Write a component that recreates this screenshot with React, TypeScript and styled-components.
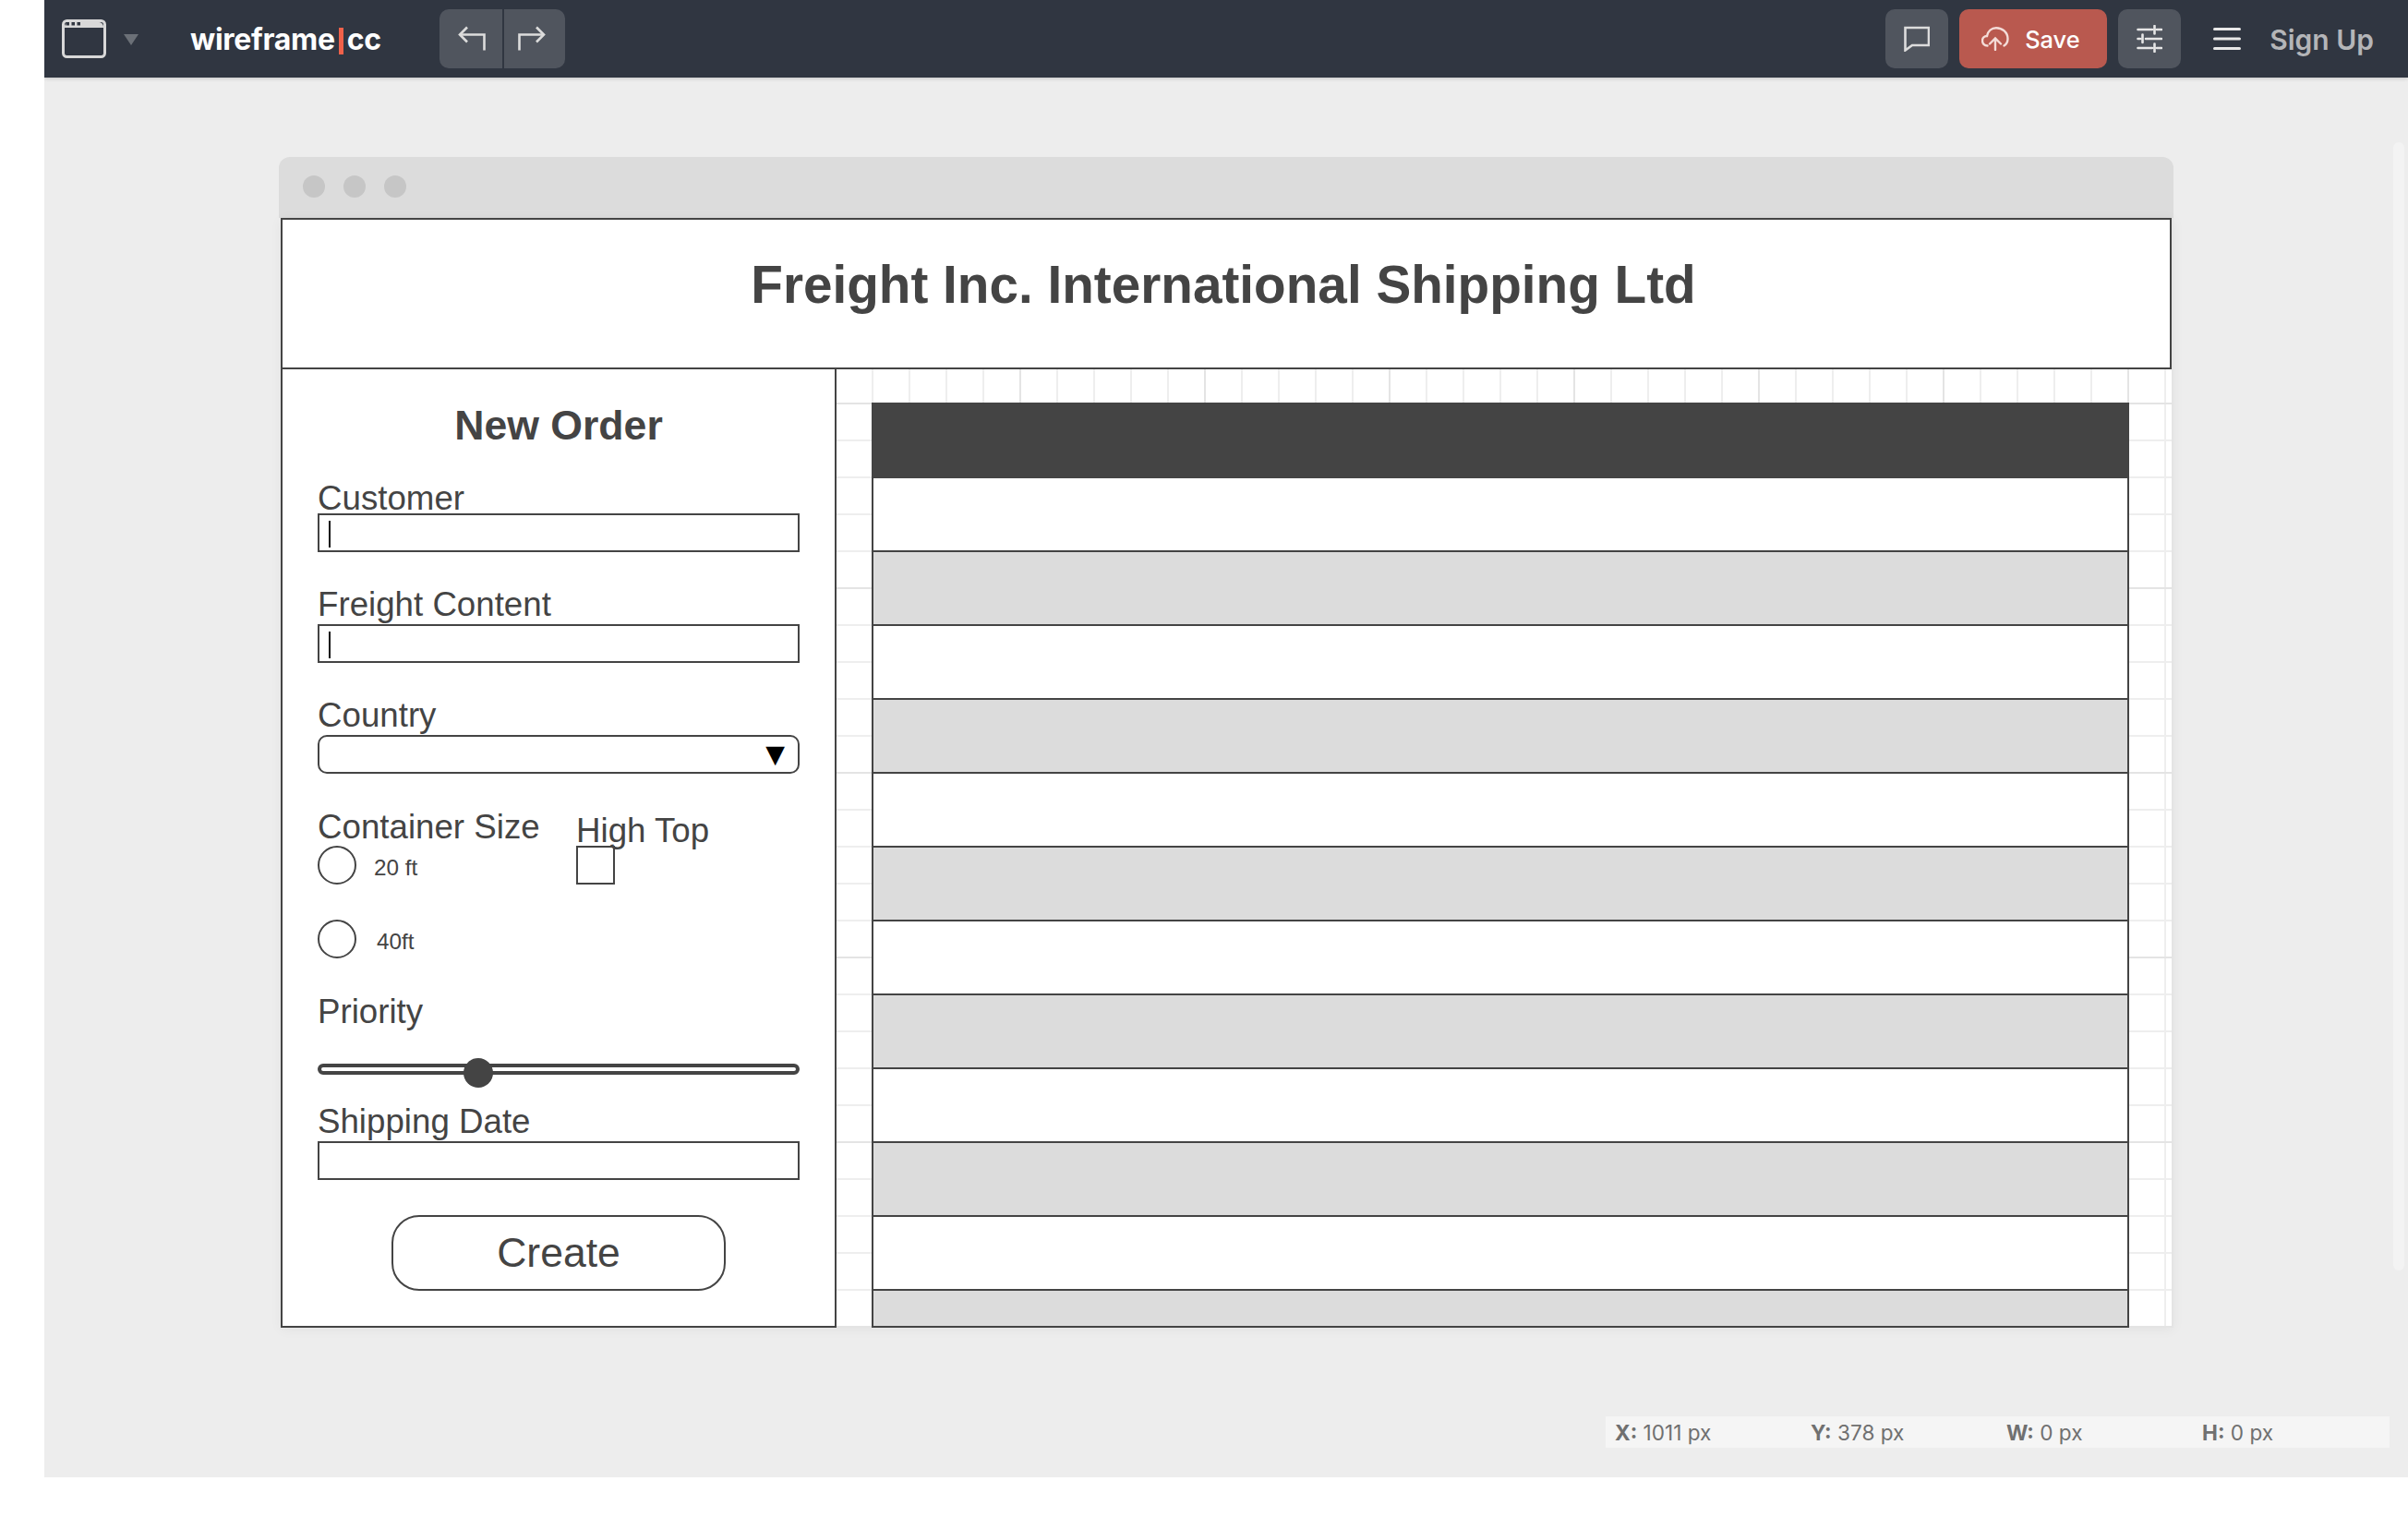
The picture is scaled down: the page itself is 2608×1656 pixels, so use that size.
import React, { FunctionComponent } from "react"
import styled, { createGlobalStyle } from "styled-components"

const GlobalStyle = createGlobalStyle`
    html, body {
        margin: 0;
        padding: 0;
        background: #fff;
    }
    * {
        box-sizing: border-box;
    }
`

const Workspace = styled.div`
    position: relative;
    margin-left: 48px;
    height: 1600px;
    background: #ededed;
    display: flex;
    flex-direction: column;
    overflow: hidden;
`

const TopBar = styled.header`
    height: 84px;
    flex: none;
    display: flex;
    align-items: center;
    padding: 0 37px 0 19px;
    background: #303641;
    box-shadow: 0 1px 4px rgba(0, 0, 0, 0.18);
    font-family: Inter, "Liberation Sans", sans-serif;
`

const Caret = styled.span`
    width: 0;
    height: 0;
    margin-left: 19px;
    margin-top: 1px;
    border-left: 8px solid transparent;
    border-right: 8px solid transparent;
    border-top: 12px solid #6b7077;
`

const Logo = styled.div`
    margin-left: 56px;
    padding-top: 2px;
    display: flex;
    align-items: center;
    color: #fff;
    font-size: 32px;
    font-weight: 700;
    line-height: 40px;
    letter-spacing: -0.3px;
`

const Pipe = styled.span`
    display: block;
    width: 5px;
    height: 29px;
    margin: 2px 4px 0 4px;
    color: transparent;
    background: #f0614a;
    font-size: 14px;
    line-height: 29px;
    letter-spacing: 0;
`

const HistoryGroup = styled.div`
    margin-left: 63px;
    height: 64px;
    display: flex;
    gap: 2px;
    border-radius: 10px;
    overflow: hidden;
`

const ToolButton = styled.button<{ $width?: number; $accent?: boolean }>`
    width: ${(p) => (p.$width ? `${p.$width}px` : "auto")};
    height: 64px;
    padding: 0;
    border: 0;
    display: flex;
    align-items: center;
    justify-content: center;
    color: #fff;
    background: ${(p) => (p.$accent ? "#b9594f" : "#50555e")};
    font-family: inherit;

    & > svg.undo {
        margin-left: 3px;
    }
    & > svg.redo {
        margin-right: 6px;
    }
`

const RightGroup = styled.div`
    margin-left: auto;
    display: flex;
    align-items: center;
    gap: 12px;
`

const RoundedButton = styled(ToolButton)`
    border-radius: 10px;
    gap: 17px;
`

const SaveButton = styled(RoundedButton)`
    justify-content: flex-start;
    padding-left: 24px;
`

const SaveLabel = styled.span`
    padding-top: 2px;
    font-size: 25.4px;
    font-weight: 500;
    line-height: 32px;
`

const MenuIcon = styled.svg`
    margin-left: 23px;
    flex: none;
`

const SignUp = styled.span`
    margin-left: 19px;
    padding-top: 2px;
    color: #b4b5b8;
    font-size: 30px;
    font-weight: 600;
    line-height: 36px;
`

const Canvas = styled.main`
    flex: 1;
    padding-top: 86px;
    display: flex;
    flex-direction: column;
`

const WindowFrame = styled.section`
    margin-left: 254px;
    width: 2052px;
`

const WindowChrome = styled.div`
    height: 66px;
    padding: 0 0 2px 26px;
    display: flex;
    align-items: center;
    gap: 20px;
    background: #dcdcdc;
    border-radius: 12px 12px 0 0;
`

const ChromeDot = styled.span`
    width: 24px;
    height: 24px;
    border-radius: 50%;
    background: #c6c6c6;
`

const Sheet = styled.div`
    margin-left: 2px;
    height: 1202px;
    border-right: 2px solid #e4e4e4;
    background-color: #fff;
    background-image:
        linear-gradient(to right, #e4e4e4 2px, transparent 2px),
        linear-gradient(to bottom, #e4e4e4 2px, transparent 2px),
        linear-gradient(to right, #eeeeee 2px, transparent 2px),
        linear-gradient(to bottom, #eeeeee 2px, transparent 2px);
    background-size: 200px 200px, 200px 200px, 40px 40px, 40px 40px;
    box-shadow: 0 2px 12px rgba(0, 0, 0, 0.05);
    font-family: "Liberation Sans", Arial, sans-serif;
    color: #444;
`

const TitleBox = styled.div`
    width: 2048px;
    height: 164px;
    padding: 39px 6px 0 0;
    border: 2px solid #444;
    background: #fff;
    text-align: center;
`

const Title = styled.h1`
    margin: 0;
    font-size: 56.7px;
    line-height: 64px;
    font-weight: 700;
`

const Columns = styled.div`
    display: flex;
    margin-top: -2px;
`

const OrderPanel = styled.form`
    width: 602px;
    height: 1040px;
    padding: 36px 38px 0;
    display: flex;
    flex-direction: column;
    border: 2px solid #444;
    background: #fff;
`

const PanelTitle = styled.h2`
    margin: 0 0 36px;
    font-size: 44.6px;
    line-height: 50px;
    font-weight: 700;
    text-align: center;
`

const Field = styled.div<{ $top?: number }>`
    margin-top: ${(p) => p.$top ?? 0}px;
    display: flex;
    flex-direction: column;
`

const Label = styled.label<{ $gap?: number }>`
    display: block;
    margin-bottom: ${(p) => (p.$gap ?? 0) - 2}px;
    font-size: 36.7px;
    line-height: 36px;
    white-space: nowrap;
`

const TextBox = styled.div`
    height: 42px;
    padding-left: 10px;
    display: flex;
    align-items: center;
    border: 2px solid #444;
    background: #fff;
`

const TextCaret = styled.span`
    width: 2px;
    height: 29px;
    margin-top: 2px;
    background: #111;
`

const SelectBox = styled(TextBox)`
    padding: 0 14px 0 0;
    justify-content: flex-end;
    border-radius: 10px;
`

const SelectArrow = styled.span`
    font-family: "DejaVu Sans", sans-serif;
    font-size: 27px;
    line-height: 38px;
    color: #000;
`

const OptionColumns = styled.div`
    margin-top: 40px;
    display: flex;
`

const SizeColumn = styled.div`
    width: 280px;
`

const TopColumn = styled.div`
    padding-top: 4px;
`

const RadioRow = styled.div<{ $top?: number; $gap: number }>`
    margin-top: ${(p) => p.$top ?? 4}px;
    height: 42px;
    display: flex;
    gap: ${(p) => p.$gap}px;
`

const RadioCircle = styled.span`
    width: 42px;
    height: 42px;
    border: 2px solid #444;
    border-radius: 50%;
    background: #fff;
`

const RadioText = styled.span`
    padding-top: 4px;
    font-size: 24.3px;
    line-height: 39px;
`

const CheckBox = styled.span`
    display: block;
    width: 42px;
    height: 42px;
    border: 2px solid #444;
    background: #fff;
`

const SliderTrack = styled.div`
    position: relative;
    margin-top: 40px;
    height: 12px;
    border: 4px solid #444;
    border-radius: 6px;
    background: #fff;
`

const SliderThumb = styled.span<{ $left: number }>`
    position: absolute;
    left: ${(p) => p.$left}px;
    top: -10px;
    width: 32px;
    height: 32px;
    border-radius: 50%;
    background: #444;
`

const CreateButton = styled.button`
    align-self: center;
    margin-top: 38px;
    width: 362px;
    height: 82px;
    padding: 0;
    border: 2px solid #444;
    border-radius: 30px;
    background: #fff;
    color: #444;
    font-family: inherit;
    font-size: 44.5px;
    line-height: 78px;
`

const OrdersTable = styled.div`
    margin: 38px 0 0 38px;
    width: 1362px;
`

const TableHead = styled.div`
    height: 82px;
    background: #444;
`

const TableRow = styled.div<{ $shaded: boolean; $short?: boolean }>`
    height: ${(p) => (p.$short ? 40 : 80)}px;
    border: 2px solid #444;
    border-top: 0;
    background: ${(p) => (p.$shaded ? "#dcdcdc" : "#fff")};
`

const StatsBar = styled.div`
    align-self: flex-end;
    margin: 96px 20px 0 0;
    width: 849px;
    height: 34px;
    padding: 2px 0 0 10px;
    display: grid;
    grid-template-columns: repeat(4, 212px);
    align-items: center;
    background: #f5f5f5;
    color: #707070;
    font-family: Inter, "Liberation Sans", sans-serif;
    font-size: 22.6px;
    line-height: 32px;
`

const StatName = styled.b`
    font-weight: 700;
`

const ScrollThumb = styled.div`
    position: absolute;
    top: 154px;
    right: 4px;
    width: 12px;
    height: 1222px;
    border-radius: 6px;
    background: #f3f3f3;
`

const iconStroke = "#dcdcdc"

const WindowIcon = () => (
    <svg width="48" height="42" viewBox="0 0 48 42" fill="none">
        <rect x="1.5" y="1.5" width="45" height="39" rx="4" stroke="#d8d8d8" strokeWidth="3" />
        <path d="M3 8a5 5 0 0 1 5-5h32a5 5 0 0 1 5 5v1H3z" fill="#d8d8d8" />
        <rect x="4.5" y="3" width="3.5" height="3.5" fill="#303641" />
        <rect x="10.5" y="3" width="3.5" height="3.5" fill="#303641" />
        <rect x="16.5" y="3" width="3.5" height="3.5" fill="#303641" />
    </svg>
)

const UndoIcon = () => (
    <svg className="undo" width="30" height="28" viewBox="0 0 30 28" fill="none" stroke={iconStroke} strokeWidth="2.6">
        <path d="M2 9.5H28.5V26.5" />
        <path d="M10 1.5L2 9.5L10 17.5" />
    </svg>
)

const RedoIcon = () => (
    <svg className="redo" width="30" height="28" viewBox="0 0 30 28" fill="none" stroke={iconStroke} strokeWidth="2.6">
        <path d="M28 9.5H1.5V26.5" />
        <path d="M20 1.5L28 9.5L20 17.5" />
    </svg>
)

const CommentIcon = () => (
    <svg width="28" height="28" viewBox="0 0 28 28" fill="none" stroke={iconStroke} strokeWidth="2.6">
        <path d="M1.5 2H27V21H9L1.5 26.5Z" />
    </svg>
)

const CloudIcon = () => (
    <svg width="30" height="26" viewBox="0 0 30 26" fill="none" stroke="#f4dcd8" strokeWidth="2.4" strokeLinecap="round">
        <path d="M6.5 20.5C3 20.5 1 18 1 15C1 12 3.2 10 6 10C7 4.5 11 1.2 16 1.2C22.5 1.2 28.5 6 28.5 13C28.5 16.5 27 19 24.5 20.5" />
        <path d="M15 25V12.5M9 18.5L15 12.5L21 18.5" />
    </svg>
)

const SlidersIcon = () => (
    <svg width="28" height="30" viewBox="0 0 28 30" fill="none" stroke="#e6e6e6" strokeWidth="2.6" strokeLinecap="round">
        <path d="M1.5 5H17M22 5H27M19.5 1V9.5" />
        <path d="M1.5 15H4M10 15H27M6.5 10.5V19" />
        <path d="M1.5 25H17M22 25H27M19.5 20.5V29" />
    </svg>
)

const HamburgerIcon = () => (
    <MenuIcon width="30" height="26" viewBox="0 0 30 26" fill="none" stroke="#e8e8e8" strokeWidth="3" strokeLinecap="round">
        <path d="M1.5 2.5H28.5M1.5 13H28.5M1.5 23.5H28.5" />
    </MenuIcon>
)

const rowKeys = Array.from({ length: 12 }, (_, i) => i)

const stats = [
    { name: "X:", value: "1011 px" },
    { name: "Y:", value: "378 px" },
    { name: "W:", value: "0 px" },
    { name: "H:", value: "0 px" },
]

const App: FunctionComponent = () => {
    return (
        <>
            <GlobalStyle />
            <Workspace>
                <TopBar>
                    <WindowIcon />
                    <Caret />
                    <Logo>
                        wireframe<Pipe>|</Pipe>cc
                    </Logo>
                    <HistoryGroup>
                        <ToolButton $width={68}>
                            <UndoIcon />
                        </ToolButton>
                        <ToolButton $width={66}>
                            <RedoIcon />
                        </ToolButton>
                    </HistoryGroup>
                    <RightGroup>
                        <RoundedButton $width={68}>
                            <CommentIcon />
                        </RoundedButton>
                        <SaveButton $width={160} $accent>
                            <CloudIcon />
                            <SaveLabel>Save</SaveLabel>
                        </SaveButton>
                        <RoundedButton $width={68}>
                            <SlidersIcon />
                        </RoundedButton>
                        <HamburgerIcon />
                        <SignUp>Sign Up</SignUp>
                    </RightGroup>
                </TopBar>
                <Canvas>
                    <WindowFrame>
                        <WindowChrome>
                            <ChromeDot />
                            <ChromeDot />
                            <ChromeDot />
                        </WindowChrome>
                        <Sheet>
                            <TitleBox>
                                <Title>Freight Inc. International Shipping Ltd</Title>
                            </TitleBox>
                            <Columns>
                                <OrderPanel>
                                    <PanelTitle>New Order</PanelTitle>
                                    <Field>
                                        <Label>Customer</Label>
                                        <TextBox>
                                            <TextCaret />
                                        </TextBox>
                                    </Field>
                                    <Field $top={39}>
                                        <Label $gap={5}>Freight Content</Label>
                                        <TextBox>
                                            <TextCaret />
                                        </TextBox>
                                    </Field>
                                    <Field $top={39}>
                                        <Label $gap={5}>Country</Label>
                                        <SelectBox>
                                            <SelectArrow>▼</SelectArrow>
                                        </SelectBox>
                                    </Field>
                                    <OptionColumns>
                                        <SizeColumn>
                                            <Label>Container Size</Label>
                                            <RadioRow $gap={19}>
                                                <RadioCircle />
                                                <RadioText>20 ft</RadioText>
                                            </RadioRow>
                                            <RadioRow $top={38} $gap={22}>
                                                <RadioCircle />
                                                <RadioText>40ft</RadioText>
                                            </RadioRow>
                                        </SizeColumn>
                                        <TopColumn>
                                            <Label>High Top</Label>
                                            <CheckBox />
                                        </TopColumn>
                                    </OptionColumns>
                                    <Field $top={40}>
                                        <Label>Priority</Label>
                                        <SliderTrack>
                                            <SliderThumb $left={154} />
                                        </SliderTrack>
                                    </Field>
                                    <Field $top={33}>
                                        <Label $gap={5}>Shipping Date</Label>
                                        <TextBox />
                                    </Field>
                                    <CreateButton type="button">Create</CreateButton>
                                </OrderPanel>
                                <OrdersTable>
                                    <TableHead />
                                    {rowKeys.map((i) => (
                                        <TableRow key={i} $shaded={i % 2 === 1} $short={i === 11} />
                                    ))}
                                </OrdersTable>
                            </Columns>
                        </Sheet>
                    </WindowFrame>
                    <StatsBar>
                        {stats.map((s) => (
                            <span key={s.name}>
                                <StatName>{s.name}</StatName> {s.value}
                            </span>
                        ))}
                    </StatsBar>
                </Canvas>
                <ScrollThumb />
            </Workspace>
        </>
    )
}

export default App
